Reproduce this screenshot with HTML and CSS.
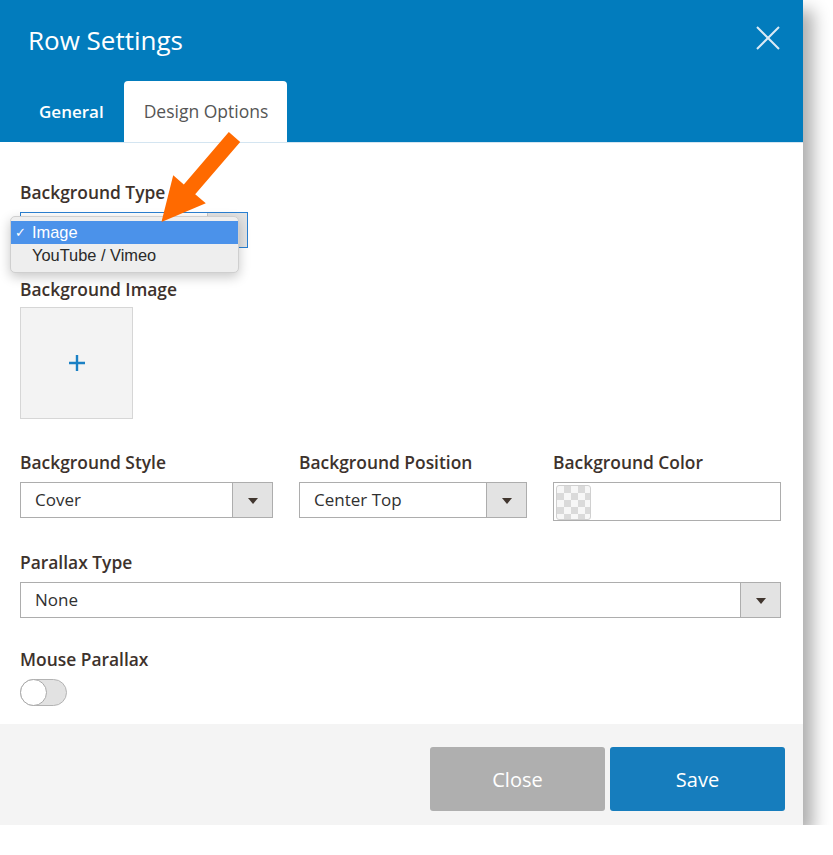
FILE: index.html
```html
<!DOCTYPE html>
<html lang="en">
<head>
<meta charset="utf-8">
<title>Row Settings</title>
<link rel="stylesheet" href="styles.css">
</head>
<body>
<div class="dialog">
  <header class="modal-header">
    <div class="title-row">
      <h1 class="title">Row Settings</h1>
      <button class="close-x" aria-label="Close">
        <svg width="24" height="24" viewBox="0 0 24 24"><path d="M1 1 L23 23 M23 1 L1 23" stroke="#dbeaf5" stroke-width="2" fill="none"/></svg>
      </button>
    </div>
    <nav class="tabs">
      <span class="tab">General</span>
      <span class="tab tab-active">Design Options</span>
    </nav>
  </header>
  <div class="tab-rule"></div>

  <main class="content">
    <div class="field field-type">
      <div class="label">Background Type</div>
      <div class="select select-focus select-narrow">
        <span class="select-value"></span>
        <span class="select-btn"><i class="caret"></i></span>
      </div>
      <ul class="popup">
        <li class="popup-item popup-selected"><span class="check">✓</span>Image</li>
        <li class="popup-item"><span class="check"></span>YouTube / Vimeo</li>
      </ul>
    </div>

    <div class="field field-image">
      <div class="label label-tight">Background Image</div>
      <div class="image-box">
        <svg width="18" height="18" viewBox="0 0 18 18"><path d="M9 1 V17 M1 9 H17" stroke="#1a80c4" stroke-width="2.4" fill="none"/></svg>
      </div>
    </div>

    <div class="field field-row">
      <div class="col">
        <div class="label label-row">Background Style</div>
        <div class="select">
          <span class="select-value">Cover</span>
          <span class="select-btn"><i class="caret"></i></span>
        </div>
      </div>
      <div class="col">
        <div class="label label-row">Background Position</div>
        <div class="select">
          <span class="select-value">Center Top</span>
          <span class="select-btn"><i class="caret"></i></span>
        </div>
      </div>
      <div class="col">
        <div class="label label-row">Background Color</div>
        <div class="color-input">
          <span class="swatch"></span>
        </div>
      </div>
    </div>

    <div class="field field-parallax">
      <div class="label">Parallax Type</div>
      <div class="select">
        <span class="select-value">None</span>
        <span class="select-btn"><i class="caret"></i></span>
      </div>
    </div>

    <div class="field field-mouse">
      <div class="label">Mouse Parallax</div>
      <span class="toggle"><span class="knob"></span></span>
    </div>
  </main>

  <footer class="modal-footer">
    <button class="btn btn-close">Close</button>
    <button class="btn btn-save">Save</button>
  </footer>

  <svg class="arrow" width="300" height="240" viewBox="0 0 300 240">
    <polygon transform="translate(234.5 137) rotate(130.7)" points="0,-7.5 69,-7.5 69,-21.5 112,0 69,21.5 69,7.5 0,7.5" fill="#ff6a00"/>
  </svg>
</div>
</body>
</html>
```

FILE: styles.css
```css
* { box-sizing: border-box; }

html, body {
  margin: 0;
  padding: 0;
  background: #ffffff;
}

body {
  font-family: "Open Sans", "Liberation Sans", sans-serif;
  color: #303030;
}

.dialog {
  position: relative;
  width: 803px;
  background: #ffffff;
  box-shadow: 10px 10px 16px rgba(0, 0, 0, 0.32);
}

/* Header */
.modal-header {
  background: #027cbd;
  height: 142px;
  display: flex;
  flex-direction: column;
}

.title-row {
  display: flex;
  justify-content: space-between;
  align-items: flex-start;
  padding: 22px 23px 0 28px;
}

.title {
  margin: 0;
  font-weight: 400;
  font-size: 26px;
  line-height: 36px;
  color: #ffffff;
}

.close-x {
  margin-top: 4px;
  padding: 0;
  border: 0;
  background: transparent;
  width: 24px;
  height: 24px;
  display: block;
}

.close-x svg { display: block; }

.tabs {
  display: flex;
  gap: 0;
  margin: 23px 0 0 19px;
}

.tab {
  height: 61px;
  line-height: 61px;
  padding: 0 20px;
  font-size: 17px;
  font-weight: 600;
  color: #ffffff;
  border-radius: 4px 4px 0 0;
}

.tab-active {
  background: #ffffff;
  color: #555555;
  font-weight: 400;
  padding: 0 19px 0 20px;
  font-size: 17.5px;
}

.tab-rule {
  height: 1px;
  margin-left: 20px;
  background: #d4e5f1;
}

/* Content */
.content {
  padding: 39px 22px 18px 20px;
}

.field { position: relative; }

.label {
  font-size: 17.4px;
  font-weight: 600;
  line-height: 20px;
  color: #3d322c;
  margin-bottom: 10px;
}

.label-tight { margin-bottom: 8px; }
.label-row { margin-bottom: 10px; }

.field-type { margin-bottom: 31px; }
.field-image { margin-bottom: 33px; }
.field-row { margin-bottom: 31px; }
.field-parallax { margin-bottom: 31px; }

.select {
  display: flex;
  height: 36px;
  border: 1px solid #adadad;
  background: #ffffff;
}

.select-narrow { width: 228px; }

.select-focus { border-color: #2a80d2; }

.select-value {
  flex: 1;
  padding-left: 14px;
  font-size: 17px;
  line-height: 34px;
  color: #303030;
}

.select-btn {
  width: 40px;
  border-left: 1px solid #adadad;
  background: #e3e3e3;
  display: flex;
  align-items: center;
  justify-content: center;
}

.select-focus .select-btn { border-left-color: #c9c9c9; }

.caret {
  width: 0;
  height: 0;
  border-left: 5px solid transparent;
  border-right: 5px solid transparent;
  border-top: 6px solid #41362f;
  margin-top: 2px;
}

/* Native-like dropdown popup */
.popup {
  position: absolute;
  left: -10px;
  top: 34px;
  width: 229px;
  margin: 0;
  padding: 4px 0 5px;
  list-style: none;
  background: #eeeeee;
  border: 1px solid #cfcfcf;
  border-radius: 5px;
  box-shadow: 0 4px 12px rgba(0, 0, 0, 0.22);
  font-family: "Liberation Sans", "Inter", sans-serif;
  font-size: 16.4px;
  z-index: 2;
}

.popup-item {
  height: 23px;
  line-height: 23px;
  display: flex;
  align-items: center;
  color: #2a2a2a;
}

.popup-selected {
  background: #4b92ea;
  color: #ffffff;
}

.check {
  width: 21px;
  padding-left: 4px;
  font-family: "DejaVu Sans", sans-serif;
  font-size: 13px;
  font-weight: 700;
}

/* Image picker */
.image-box {
  width: 113px;
  height: 112px;
  border: 1px solid #d6d6d6;
  background: #f3f3f3;
  display: flex;
  align-items: center;
  justify-content: center;
}

.image-box svg { display: block; }

/* Row of three */
.field-row {
  display: grid;
  grid-template-columns: 253px 228px 228px;
  column-gap: 26px;
}

.color-input {
  height: 39px;
  border: 1px solid #adadad;
  padding: 2px;
  background: #ffffff;
}

.swatch {
  display: block;
  width: 35px;
  height: 35px;
  border: 1px solid #d0d0d0;
  border-radius: 3px;
  background-color: #f7f7f7;
  background-image: conic-gradient(#dadada 25%, #f7f7f7 0 50%, #dadada 0 75%, #f7f7f7 0);
  background-size: 14px 14px;
}

/* Toggle */
.toggle {
  display: block;
  width: 47px;
  height: 27px;
  border: 1px solid #b3b3b3;
  border-radius: 14px;
  background: #e2e2e2;
  position: relative;
}

.knob {
  position: absolute;
  left: -1px;
  top: -1px;
  width: 27px;
  height: 27px;
  border-radius: 50%;
  background: #ffffff;
  border: 1px solid #a8a8a8;
}

/* Footer */
.modal-footer {
  background: #f4f4f4;
  height: 101px;
  padding: 23px 18px 14px 0;
  display: flex;
  justify-content: flex-end;
  gap: 5px;
}

.btn {
  width: 175px;
  height: 64px;
  border: 0;
  border-radius: 3px;
  font-family: "Open Sans", "Liberation Sans", sans-serif;
  font-size: 20px;
  color: #ffffff;
}

.btn-close { background: #afafaf; }
.btn-save { background: #167dbd; }

/* Annotation arrow overlay */
.arrow {
  position: absolute;
  left: 0;
  top: 0;
  pointer-events: none;
  z-index: 3;
}
```
